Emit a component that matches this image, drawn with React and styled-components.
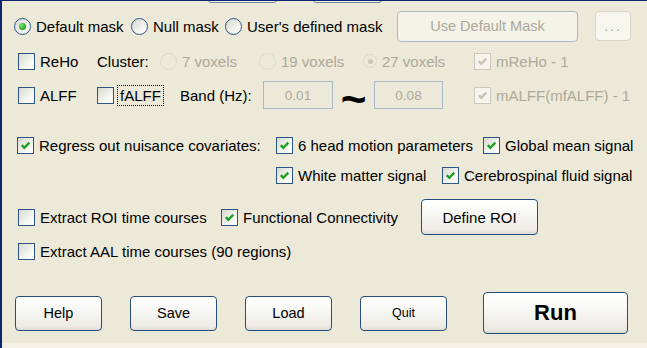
import React from 'react';
import styled, { createGlobalStyle } from 'styled-components';

const GlobalStyle = createGlobalStyle`
  html, body {
    margin: 0;
    padding: 0;
    background: #ece9d8;
  }
`;

const Page = styled.div`
  width: 647px;
  height: 348px;
  box-sizing: border-box;
  overflow: hidden;
  background: #ece9d8;
  border-left: 2px solid #0d2670;
  border-top: 1px solid #0d2670;
  display: flex;
  flex-direction: column;
  font-family: 'Liberation Sans', Arial, sans-serif;
  font-size: 15px;
  color: #000;
`;

const TopStrip = styled.div`
  height: 2px;
  overflow: hidden;
  display: flex;
  align-items: flex-end;
  gap: 36px;
  padding-left: 206px;
  flex: none;
`;

const PartialButton = styled.div`
  width: 69px;
  height: 10px;
  flex: none;
  box-sizing: border-box;
  border: 1px solid #6d86a6;
  border-radius: 3px;
  background: #f5f4ee;
`;

const Row = styled.div`
  display: flex;
  align-items: center;
  flex: none;
  height: ${(p) => p.$h}px;
  margin-top: ${(p) => p.$mt || 0}px;
  padding-left: ${(p) => p.$pl || 0}px;
  gap: ${(p) => p.$gap || 0}px;
`;

const Cell = styled.div`
  display: flex;
  align-items: center;
  gap: 5px;
  flex: none;
  width: ${(p) => (p.$w ? `${p.$w}px` : 'auto')};
  justify-content: ${(p) => (p.$center ? 'center' : 'flex-start')};
`;

const Label = styled.span`
  white-space: nowrap;
  color: ${(p) => (p.$disabled ? '#aca899' : '#000')};
`;

const FocusLabel = styled.span`
  white-space: nowrap;
  outline: 1px dotted #000;
  outline-offset: 1px;
  padding: 0 1px;
`;

const Box = styled.span`
  width: 17px;
  height: 17px;
  flex: none;
  box-sizing: border-box;
  border: 1px solid ${(p) => (p.$disabled ? '#cac8bb' : '#2c5585')};
  background: ${(p) =>
    p.$disabled ? '#f5f4ee' : 'linear-gradient(135deg, #d9d9d2 0%, #f4f4f0 60%, #ffffff 100%)'};
  display: flex;
  align-items: center;
  justify-content: center;
`;

const Circle = styled.span`
  width: ${(p) => p.$size}px;
  height: ${(p) => p.$size}px;
  flex: none;
  box-sizing: border-box;
  border-radius: 50%;
  border: 1px solid ${(p) => (p.$disabled ? '#dcd9cc' : '#2c5585')};
  background: ${(p) =>
    p.$disabled ? '#ece9d8' : 'linear-gradient(135deg, #d6d6cf 0%, #f2f2ee 60%, #ffffff 100%)'};
  display: flex;
  align-items: center;
  justify-content: center;
`;

const Dot = styled.span`
  width: ${(p) => (p.$disabled ? 5 : 7)}px;
  height: ${(p) => (p.$disabled ? 5 : 7)}px;
  border-radius: 50%;
  background: ${(p) =>
    p.$disabled ? '#cbc8ba' : 'radial-gradient(circle at 35% 35%, #7be37b 0%, #2fb52f 55%, #1c8f1c 100%)'};
`;

const XPButton = styled.div`
  width: ${(p) => p.$w}px;
  height: ${(p) => p.$h}px;
  flex: none;
  box-sizing: border-box;
  margin-left: ${(p) => p.$ml || 0}px;
  border: 1px solid ${(p) => (p.$disabled ? '#a9b7c6' : '#264f7c')};
  border-radius: 4px;
  background: ${(p) =>
    p.$disabled
      ? '#f4f3ea'
      : 'linear-gradient(180deg, #ffffff 0%, #f6f6f3 45%, #eceae3 90%, #dcdad2 100%)'};
  color: ${(p) => (p.$disabled ? '#aca899' : '#000')};
  font-size: ${(p) => p.$fs || 14.5}px;
  font-weight: ${(p) => (p.$bold ? 700 : 400)};
  display: flex;
  align-items: center;
  justify-content: center;
  white-space: nowrap;
`;

const DotsButton = styled.div`
  width: 36px;
  height: 30px;
  flex: none;
  box-sizing: border-box;
  margin-left: 17px;
  border: 1px solid #d8d5c6;
  border-radius: 4px;
  background: #f6f5ee;
  color: #aca899;
  font-size: 14px;
  letter-spacing: 2px;
  display: flex;
  align-items: flex-end;
  justify-content: center;
  padding-bottom: 6px;
`;

const Field = styled.div`
  width: ${(p) => p.$w}px;
  height: 28px;
  flex: none;
  box-sizing: border-box;
  border: 1px solid #a9b9c9;
  background: #ece9d8;
  color: #aca899;
  font-size: 13.5px;
  display: flex;
  align-items: center;
  justify-content: center;
`;

const Tilde = styled.span`
  font-size: 44px;
  font-weight: 700;
  line-height: 1;
  margin-top: 8px;
`;

const Spacer = styled.div`
  flex: 1;
`;

const BottomStrip = styled.div`
  height: 5px;
  flex: none;
  background: #f3f1e6;
`;

function Check({ checked, disabled }) {
  return (
    <Box $disabled={disabled}>
      {checked && (
        <svg width="13" height="13" viewBox="0 0 13 13">
          <path
            d="M2.8 6.2 L5.3 8.8 L10.3 3.6"
            fill="none"
            stroke={disabled ? '#c6c3b5' : '#21a121'}
            strokeWidth="2.4"
          />
        </svg>
      )}
    </Box>
  );
}

function Radio({ checked, disabled, size = 17 }) {
  return (
    <Circle $disabled={disabled} $size={size}>
      {checked && <Dot $disabled={disabled} />}
    </Circle>
  );
}

function CheckItem({ w, checked, disabled, children }) {
  return (
    <Cell $w={w}>
      <Check checked={checked} disabled={disabled} />
      <Label $disabled={disabled}>{children}</Label>
    </Cell>
  );
}

function RadioItem({ w, checked, disabled, size, children }) {
  return (
    <Cell $w={w}>
      <Radio checked={checked} disabled={disabled} size={size} />
      <Label $disabled={disabled}>{children}</Label>
    </Cell>
  );
}

export default function App() {
  return (
    <>
      <GlobalStyle />
      <Page>
        <TopStrip>
          <PartialButton />
          <PartialButton />
        </TopStrip>

        <Row $h={46} $pl={12}>
          <RadioItem w={117} checked>Default mask</RadioItem>
          <RadioItem w={94}>Null mask</RadioItem>
          <RadioItem w={172}>User's defined mask</RadioItem>
          <XPButton $w={181} $h={31} $disabled>Use Default Mask</XPButton>
          <DotsButton>...</DotsButton>
        </Row>

        <Row $h={24} $pl={16}>
          <CheckItem w={79}>ReHo</CheckItem>
          <Cell $w={63}>
            <Label>Cluster:</Label>
          </Cell>
          <RadioItem w={99} disabled>7 voxels</RadioItem>
          <RadioItem w={104} disabled>19 voxels</RadioItem>
          <RadioItem w={111} disabled checked size={14}>27 voxels</RadioItem>
          <CheckItem checked disabled>mReHo - 1</CheckItem>
        </Row>

        <Row $h={32} $mt={6} $pl={16}>
          <CheckItem w={79}>ALFF</CheckItem>
          <Cell $w={83}>
            <Check />
            <FocusLabel>fALFF</FocusLabel>
          </Cell>
          <Cell $w={83}>
            <Label>Band (Hz):</Label>
          </Cell>
          <Field $w={70}>0.01</Field>
          <Cell $w={41} $center>
            <Tilde>~</Tilde>
          </Cell>
          <Field $w={69}>0.08</Field>
          <Cell $w={31} />
          <CheckItem checked disabled>mALFF(mfALFF) - 1</CheckItem>
        </Row>

        <Row $h={32} $mt={18} $pl={15}>
          <CheckItem w={259} checked>Regress out nuisance covariates:</CheckItem>
          <CheckItem w={207} checked>6 head motion parameters</CheckItem>
          <CheckItem checked>Global mean signal</CheckItem>
        </Row>

        <Row $h={28} $pl={274}>
          <CheckItem w={166} checked>White matter signal</CheckItem>
          <CheckItem checked>Cerebrospinal fluid signal</CheckItem>
        </Row>

        <Row $h={38} $mt={9} $pl={16}>
          <CheckItem w={203}>Extract ROI time courses</CheckItem>
          <CheckItem w={200} checked>Functional Connectivity</CheckItem>
          <XPButton $w={117} $h={36} $fs={15}>Define ROI</XPButton>
        </Row>

        <Row $h={30} $pl={16}>
          <CheckItem>Extract AAL time courses (90 regions)</CheckItem>
        </Row>

        <Row $h={44} $mt={25} $pl={13} $gap={28}>
          <XPButton $w={87} $h={35}>Help</XPButton>
          <XPButton $w={87} $h={35}>Save</XPButton>
          <XPButton $w={87} $h={35}>Load</XPButton>
          <XPButton $w={87} $h={35} $fs={12.5}>Quit</XPButton>
          <XPButton $w={145} $h={42} $fs={22} $bold $ml={8}>Run</XPButton>
        </Row>

        <Spacer />
        <BottomStrip />
      </Page>
    </>
  );
}
